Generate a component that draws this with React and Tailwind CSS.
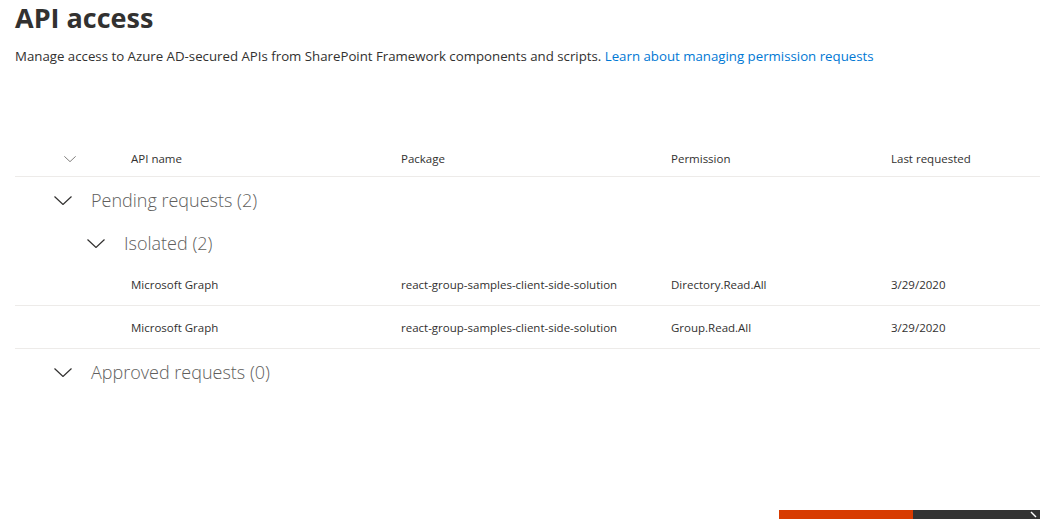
import React from 'react';

const font = { fontFamily: '"Open Sans", "Noto Sans", Arial, sans-serif' };

const Chevron = ({ size = 18, className = '' }) => (
  <svg width={size} height={size / 2} viewBox="0 0 18 9" className={className} fill="none">
    <path d="M0.5 0.5 L9 8.5 L17.5 0.5" stroke="currentColor" strokeWidth="1.2" />
  </svg>
);

const rows = [
  { api: 'Microsoft Graph', pkg: 'react-group-samples-client-side-solution', perm: 'Directory.Read.All', date: '3/29/2020' },
  { api: 'Microsoft Graph', pkg: 'react-group-samples-client-side-solution', perm: 'Group.Read.All', date: '3/29/2020' },
];

const GroupHeader = ({ label, indent, h = 'h-[44px]' }) => (
  <div className={`flex items-center ${h} pt-[3px]`} style={{ paddingLeft: indent }}>
    <Chevron className="text-[#323130]" />
    <span className="ml-[19px] text-[18px] font-light text-[#605e5c]">{label}</span>
  </div>
);

export default function App() {
  return (
    <div className="w-[1040px] h-[519px] overflow-hidden bg-white flex flex-col" style={font}>
      <div className="pl-[15px]">
        <h1 className="text-[27px] leading-[36px] font-bold text-[#323130]">API access</h1>
        <p className="mt-[10px] text-[13.25px] leading-[20px] text-[#323130]">
          Manage access to Azure AD-secured APIs from SharePoint Framework components and scripts.{' '}
          <a className="text-[#0078d4]">Learn about managing permission requests</a>
        </p>
      </div>

      {/* list */}
      <div className="ml-[15px] mt-[76px] w-[1100px]">
        <div className="flex items-center h-[35px] border-b border-[#edebe9] text-[11.5px] text-[#323130]">
          <div className="w-[116px] flex items-center pl-[49px]">
            <Chevron size={12} className="text-[#605e5c]" />
          </div>
          <div className="w-[270px]">API name</div>
          <div className="w-[270px]">Package</div>
          <div className="w-[220px]">Permission</div>
          <div className="flex-1">Last requested</div>
        </div>

        <GroupHeader label="Pending requests (2)" indent={39} />
        <GroupHeader label="Isolated (2)" indent={72} h="h-[42px]" />

        {rows.map((r, i) => (
          <div key={i} className="flex items-center h-[43px] pt-[1px] border-b border-[#edebe9] text-[11.5px] text-[#323130]">
            <div className="w-[116px]" />
            <div className="w-[270px]">{r.api}</div>
            <div className="w-[270px]">{r.pkg}</div>
            <div className="w-[220px]">{r.perm}</div>
            <div className="flex-1">{r.date}</div>
          </div>
        ))}

        <GroupHeader label="Approved requests (0)" indent={39} />
      </div>

      <div className="mt-auto flex h-[9px] pl-[779px]">
        <div className="w-[134px] bg-[#d83b01]" />
        <div className="flex-1 bg-[#333333] relative">
          <svg width="8" height="9" viewBox="0 0 8 9" className="absolute right-[2px] top-0">
            <path d="M1 2 L6 7" stroke="#ffffff" strokeWidth="1.4" />
          </svg>
        </div>
      </div>
    </div>
  );
}
